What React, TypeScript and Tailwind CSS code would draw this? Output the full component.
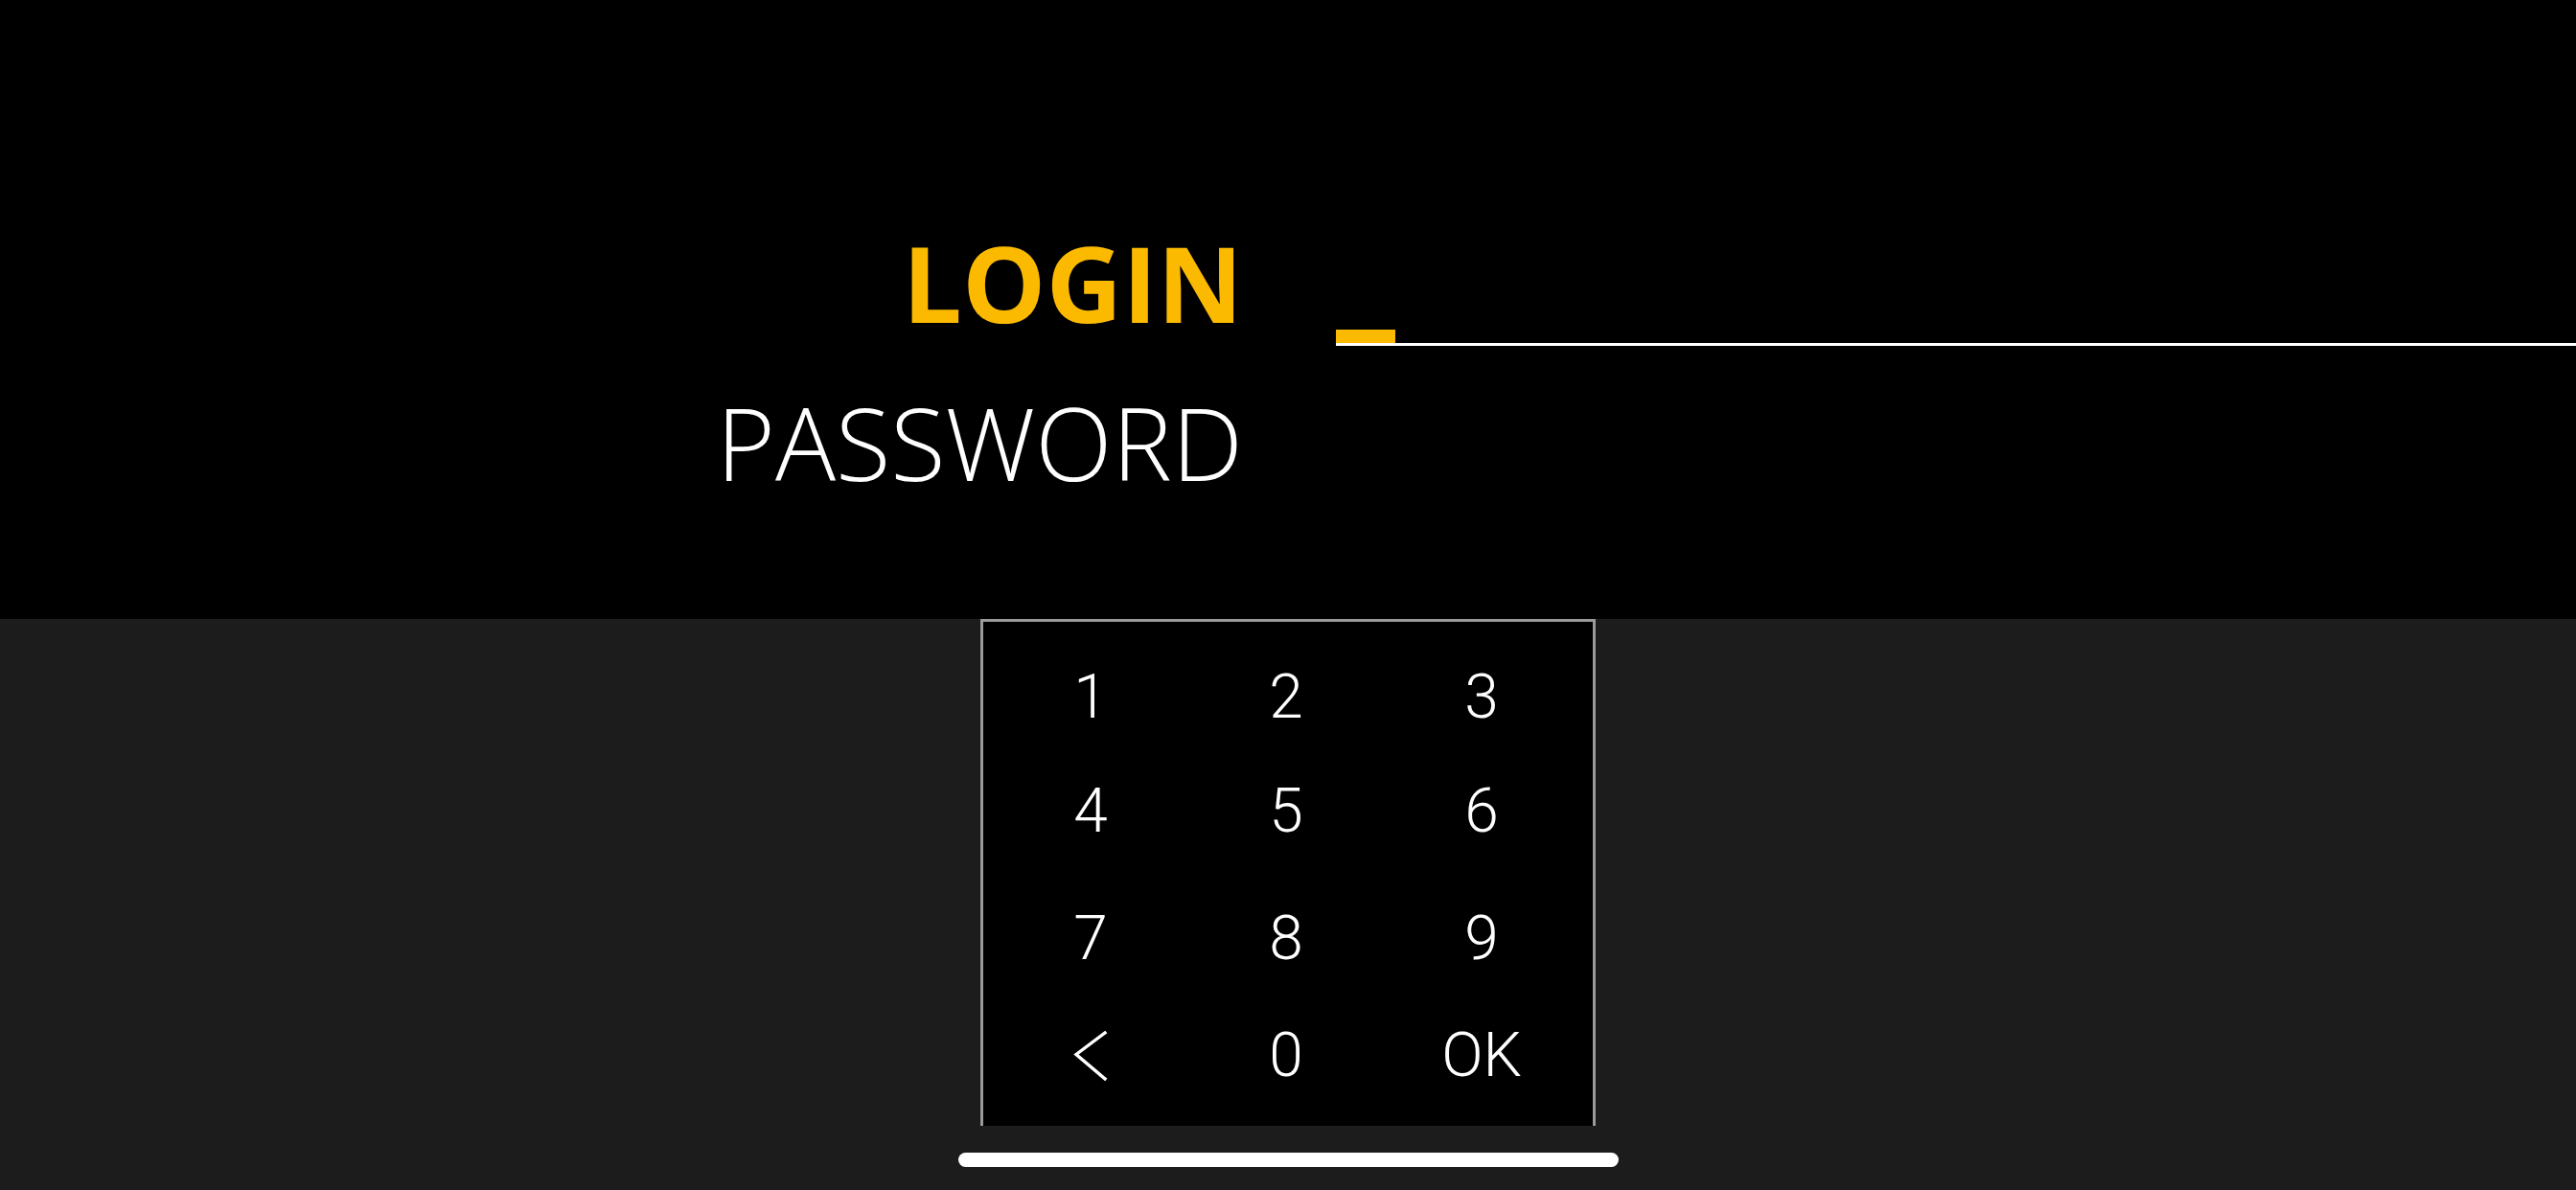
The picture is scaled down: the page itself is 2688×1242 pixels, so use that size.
import React from 'react'

const keys = ['1', '2', '3', '4', '5', '6', '7', '8', '9', 'back', '0', 'OK']

function BackKey() {
  return (
    <svg width="36" height="52" viewBox="0 0 36 52" fill="none">
      <path d="M33 2 L3 24.5 L33 50" stroke="white" strokeWidth="3.4" strokeLinecap="square" strokeLinejoin="miter" />
    </svg>
  )
}

export default function App() {
  return (
    <div className="w-[2688px] h-[1242px] flex flex-col bg-[#1c1c1c] overflow-hidden">
      {/* header with labels and input */}
      <div className="h-[646px] bg-black flex items-start pt-[239px]">
        <div className="w-[1297px] flex flex-col items-end" style={{ fontFamily: '"Open Sans", sans-serif' }}>
          <div className="text-[110px] leading-[110px] font-bold text-[#fbba00]">LOGIN</div>
          <div className="mt-[60px] text-[105px] leading-[105px] font-light text-white">PASSWORD</div>
        </div>
        <div className="ml-[97px] mt-[105px] flex-1 flex flex-col">
          <div className="w-[62px] h-[14px] bg-[#fbba00]" />
          <div className="h-[3px] bg-white" />
        </div>
      </div>

      {/* keypad */}
      <div className="flex-1 flex flex-col items-center">
        <div className="w-[642px] h-[529px] bg-black border-x-[3px] border-t-[3px] border-[#9a9a9a] pt-[14px] pl-[10px]">
          <div
            className="grid grid-cols-[repeat(3,204px)] grid-rows-[130px_108px_158px_86px] text-white text-[64px] font-light"
            style={{ fontFamily: 'Roboto, sans-serif' }}
          >
            {keys.map((k) => (
              <div key={k} className="flex items-center justify-center leading-none">
                {k === 'back' ? <BackKey /> : k}
              </div>
            ))}
          </div>
        </div>
        <div className="mt-[28px] w-[689px] h-[15px] rounded-full bg-white" />
      </div>
    </div>
  )
}
